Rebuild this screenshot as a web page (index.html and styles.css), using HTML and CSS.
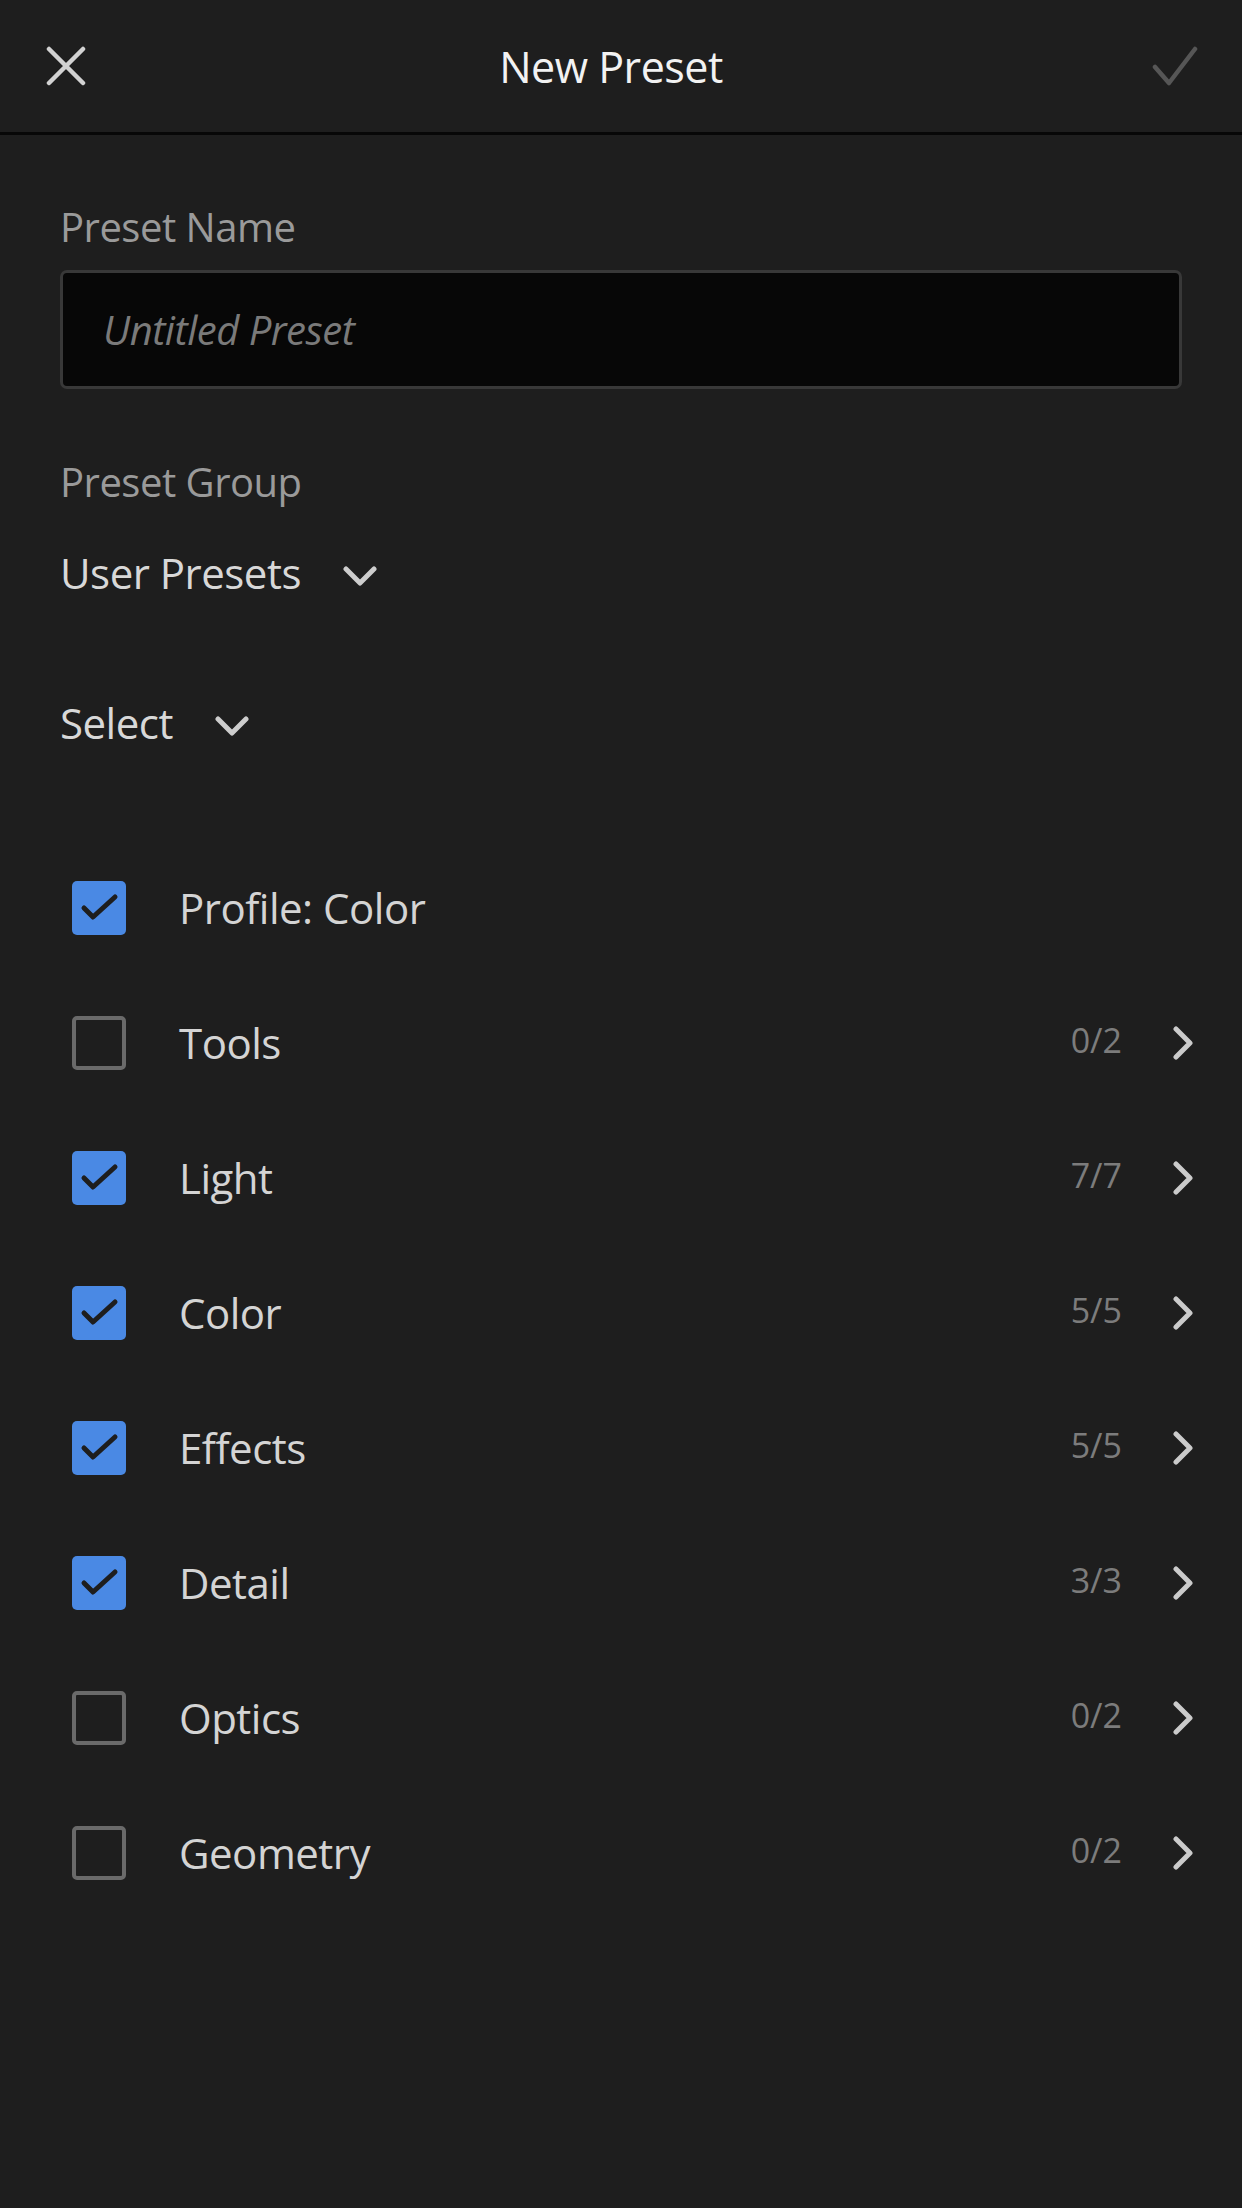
FILE: index.html
```html
<!DOCTYPE html>
<html lang="en">
<head>
    <meta charset="UTF-8">
    <meta name="viewport" content="width=device-width, initial-scale=1.0">
    <title>New Preset</title>
    <link rel="stylesheet" href="styles.css">
</head>
<body>
    <header class="top-bar">
        <button class="icon-btn close-btn" aria-label="Close">
            <svg width="40" height="40" viewBox="0 0 40 40"><path d="M3 3 L37 37 M37 3 L3 37" stroke="#d2d2d2" stroke-width="4.5" stroke-linecap="round" fill="none"/></svg>
        </button>
        <h1 class="title">New Preset</h1>
        <button class="icon-btn done-btn" aria-label="Done">
            <svg width="46" height="40" viewBox="0 0 46 40"><path d="M3 21 L17 37 L43 3" stroke="#565656" stroke-width="4.5" stroke-linecap="round" stroke-linejoin="round" fill="none"/></svg>
        </button>
    </header>

    <main class="content">
        <label class="field-label" for="presetName">Preset Name</label>
        <input type="text" id="presetName" class="name-input" placeholder="Untitled Preset">

        <div class="field-label group-label">Preset Group</div>
        <div class="dropdown group-dropdown">
            <span>User Presets</span>
            <svg class="chev-down" width="34" height="20" viewBox="0 0 34 20"><path d="M3 3 L17 17 L31 3" stroke="#cdcdcd" stroke-width="5" stroke-linecap="round" stroke-linejoin="round" fill="none"/></svg>
        </div>

        <div class="dropdown select-dropdown">
            <span>Select</span>
            <svg class="chev-down" width="34" height="20" viewBox="0 0 34 20"><path d="M3 3 L17 17 L31 3" stroke="#cdcdcd" stroke-width="5" stroke-linecap="round" stroke-linejoin="round" fill="none"/></svg>
        </div>
    </main>

    <ul class="settings-list">
        <li class="setting-row">
            <span class="checkbox checked"><svg width="54" height="54" viewBox="0 0 54 54"><path d="M12 27 L21 36 L43 16" stroke="#1e1e1e" stroke-width="5" stroke-linecap="round" stroke-linejoin="round" fill="none"/></svg></span>
            <span class="setting-name">Profile: Color</span>
        </li>
        <li class="setting-row">
            <span class="checkbox"></span>
            <span class="setting-name">Tools</span>
            <span class="count">0/2</span>
            <svg class="chev-right" width="22" height="34" viewBox="0 0 22 34"><path d="M4 3 L18 17 L4 31" stroke="#cbcbcb" stroke-width="5" stroke-linecap="round" stroke-linejoin="round" fill="none"/></svg>
        </li>
        <li class="setting-row">
            <span class="checkbox checked"><svg width="54" height="54" viewBox="0 0 54 54"><path d="M12 27 L21 36 L43 16" stroke="#1e1e1e" stroke-width="5" stroke-linecap="round" stroke-linejoin="round" fill="none"/></svg></span>
            <span class="setting-name">Light</span>
            <span class="count">7/7</span>
            <svg class="chev-right" width="22" height="34" viewBox="0 0 22 34"><path d="M4 3 L18 17 L4 31" stroke="#cbcbcb" stroke-width="5" stroke-linecap="round" stroke-linejoin="round" fill="none"/></svg>
        </li>
        <li class="setting-row">
            <span class="checkbox checked"><svg width="54" height="54" viewBox="0 0 54 54"><path d="M12 27 L21 36 L43 16" stroke="#1e1e1e" stroke-width="5" stroke-linecap="round" stroke-linejoin="round" fill="none"/></svg></span>
            <span class="setting-name">Color</span>
            <span class="count">5/5</span>
            <svg class="chev-right" width="22" height="34" viewBox="0 0 22 34"><path d="M4 3 L18 17 L4 31" stroke="#cbcbcb" stroke-width="5" stroke-linecap="round" stroke-linejoin="round" fill="none"/></svg>
        </li>
        <li class="setting-row">
            <span class="checkbox checked"><svg width="54" height="54" viewBox="0 0 54 54"><path d="M12 27 L21 36 L43 16" stroke="#1e1e1e" stroke-width="5" stroke-linecap="round" stroke-linejoin="round" fill="none"/></svg></span>
            <span class="setting-name">Effects</span>
            <span class="count">5/5</span>
            <svg class="chev-right" width="22" height="34" viewBox="0 0 22 34"><path d="M4 3 L18 17 L4 31" stroke="#cbcbcb" stroke-width="5" stroke-linecap="round" stroke-linejoin="round" fill="none"/></svg>
        </li>
        <li class="setting-row">
            <span class="checkbox checked"><svg width="54" height="54" viewBox="0 0 54 54"><path d="M12 27 L21 36 L43 16" stroke="#1e1e1e" stroke-width="5" stroke-linecap="round" stroke-linejoin="round" fill="none"/></svg></span>
            <span class="setting-name">Detail</span>
            <span class="count">3/3</span>
            <svg class="chev-right" width="22" height="34" viewBox="0 0 22 34"><path d="M4 3 L18 17 L4 31" stroke="#cbcbcb" stroke-width="5" stroke-linecap="round" stroke-linejoin="round" fill="none"/></svg>
        </li>
        <li class="setting-row">
            <span class="checkbox"></span>
            <span class="setting-name">Optics</span>
            <span class="count">0/2</span>
            <svg class="chev-right" width="22" height="34" viewBox="0 0 22 34"><path d="M4 3 L18 17 L4 31" stroke="#cbcbcb" stroke-width="5" stroke-linecap="round" stroke-linejoin="round" fill="none"/></svg>
        </li>
        <li class="setting-row">
            <span class="checkbox"></span>
            <span class="setting-name">Geometry</span>
            <span class="count">0/2</span>
            <svg class="chev-right" width="22" height="34" viewBox="0 0 22 34"><path d="M4 3 L18 17 L4 31" stroke="#cbcbcb" stroke-width="5" stroke-linecap="round" stroke-linejoin="round" fill="none"/></svg>
        </li>
    </ul>
</body>
</html>
```

FILE: styles.css
```css
* {
    box-sizing: border-box;
}

body {
    margin: 0;
    min-height: 100vh;
    background-color: #1e1e1e;
    font-family: "Open Sans", "Noto Sans", sans-serif;
    color: #d4d4d4;
}

/* header bar */
.top-bar {
    height: 135px;
    display: flex;
    align-items: center;
    justify-content: space-between;
    padding: 0 44px 0 46px;
    border-bottom: 3px solid #070707;
}

.icon-btn {
    background: none;
    border: none;
    padding: 0;
    display: flex;
    width: 46px;
    height: 40px;
    align-items: center;
    justify-content: center;
}

.close-btn {
    justify-content: flex-start;
}

.title {
    margin: 0 22px 0 0;
    font-size: 43px;
    font-weight: 400;
    color: #f2f2f2;
    line-height: 1;
    letter-spacing: -0.5px;
}

/* form */
.content {
    padding: 72px 60px 0;
}

.field-label {
    display: block;
    font-size: 40px;
    line-height: 40px;
    color: #9a9a9a;
    letter-spacing: -0.5px;
}

.name-input {
    display: block;
    width: 100%;
    height: 119px;
    margin-top: 23px;
    padding: 0 40px;
    background-color: #070707;
    border: 3px solid #383838;
    border-radius: 7px;
    font-family: inherit;
    font-size: 40px;
    color: #d4d4d4;
    outline: none;
    letter-spacing: -0.5px;
}

.name-input::placeholder {
    font-style: italic;
    color: #7a7a7a;
}

.group-label {
    margin-top: 73px;
}

.dropdown {
    display: flex;
    align-items: center;
    gap: 42px;
    font-size: 42px;
    line-height: 42px;
    color: #d8d8d8;
    letter-spacing: -0.5px;
}

.group-dropdown {
    margin-top: 50px;
}

.select-dropdown {
    margin-top: 108px;
}

.chev-down {
    margin-top: 6px;
}

/* settings checklist */
.settings-list {
    list-style: none;
    margin: 96px 0 0;
    padding: 0 48px 0 72px;
}

.setting-row {
    height: 135px;
    display: flex;
    align-items: center;
}

.checkbox {
    width: 54px;
    height: 54px;
    flex-shrink: 0;
    border: 4px solid #6a6a6a;
    border-radius: 5px;
}

.checkbox.checked {
    border: none;
    background-color: #4a89e4;
}

.checkbox svg {
    display: block;
}

.setting-name {
    flex: 1;
    margin-left: 53px;
    font-size: 42px;
    line-height: 1;
    color: #d4d4d4;
    letter-spacing: -0.5px;
}

.count {
    font-size: 34px;
    line-height: 1;
    color: #7c7c7c;
    margin-right: 50px;
    margin-top: -6px;
}
```
